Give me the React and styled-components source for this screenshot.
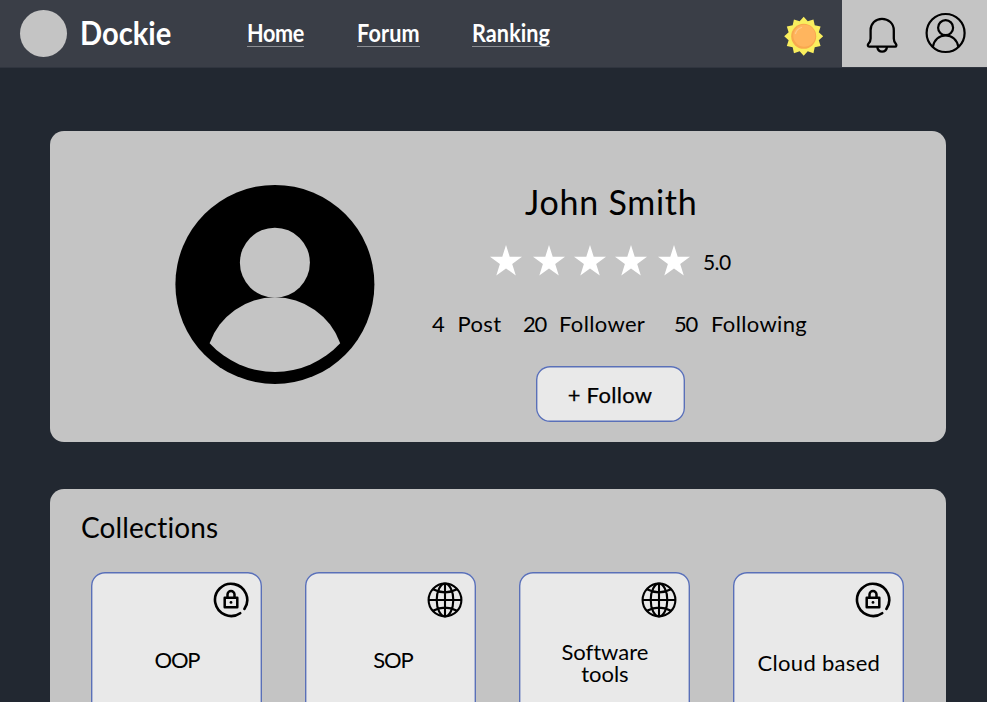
import React from "react";
import styled, { createGlobalStyle } from "styled-components";

const GlobalStyle = createGlobalStyle`
  * { box-sizing: border-box; }
  body {
    margin: 0;
    background: #222831;
    color: #000;
    font-family: Lato, "Noto Sans", sans-serif;
    font-variant-ligatures: none;
  }
  svg { display: block; flex: none; }
`;

const Page = styled.div`
  height: 702px;
  overflow: hidden;
  background: #222831;
`;

const Header = styled.header`
  display: flex;
  align-items: stretch;
  height: 68px;
  background: #3a3e47;
  border-bottom: 1px solid #30353f;
`;

const Brand = styled.div`
  display: flex;
  flex: none;
  width: 247px;
  padding: 0 0 1px 20px;
  align-items: center;
  gap: 13px;
`;

const Logo = styled.div`
  flex: none;
  width: 47px;
  height: 47px;
  border-radius: 50%;
  background: #c4c4c4;
`;

const BrandName = styled.span`
  font-size: 32px;
  font-weight: 700;
  line-height: 40px;
  color: #fff;
  transform: scaleX(0.91);
  transform-origin: left;
`;

const Nav = styled.nav`
  display: grid;
  grid-template-columns: 109.5px 115.5px 78px;
  align-items: start;
  padding-top: 18px;
`;

const NavLink = styled.a`
  width: ${(p) => p.$width}px;
  height: 29px;
  border-bottom: 1px solid #8c8f94;
  color: #fff;
`;

const NavLabel = styled.span`
  display: block;
  width: max-content;
  font-size: 24px;
  font-weight: 700;
  line-height: 30px;
  letter-spacing: ${(p) => p.$spacing || 0}px;
  transform: scaleX(0.9);
  transform-origin: left;
`;

const ThemeToggle = styled.div`
  margin: 16px 18px 0 auto;
`;

const AccountTools = styled.div`
  display: flex;
  flex: none;
  width: 145px;
  gap: 26px;
  padding: 12px 0 0 24px;
  background: #c4c4c4;
`;

const Main = styled.main`
  display: flex;
  flex-direction: column;
  gap: 47px;
  width: 895.5px;
  margin: 63px 0 0 50px;
`;

const Panel = styled.section`
  background: #c4c4c4;
  border-radius: 14px;
`;

const ProfilePanel = styled(Panel)`
  display: flex;
  height: 311px;
  padding-left: 125px;
  gap: 57px;
`;

const AvatarBox = styled.div`
  padding-top: 53px;
`;

const Info = styled.div`
  display: flex;
  flex-direction: column;
  align-items: flex-start;
  padding-top: 51px;
`;

const Name = styled.h1`
  margin: 0 0 0 93px;
  font-size: 34px;
  font-weight: 400;
  line-height: 40px;
  letter-spacing: 0.75px;
`;

const Rating = styled.div`
  display: grid;
  grid-template-columns: 43px 41px 41px 43px 45px auto;
  margin: 23px 0 0 58px;
`;

const Score = styled.span`
  font-size: 21px;
  line-height: 33px;
  letter-spacing: -0.6px;
`;

const Stats = styled.div`
  display: grid;
  grid-template-columns: 91px 151px auto;
  height: 28px;
  margin-top: 32px;
`;

const Stat = styled.div`
  display: grid;
  grid-template-columns: ${(p) => p.$column}px auto;
  font-size: 22px;
  line-height: 28px;
  letter-spacing: 0.35px;
`;

const Count = styled.span`
  letter-spacing: -1.3px;
`;

const FollowButton = styled.button`
  width: 149px;
  height: 56px;
  margin: 27.5px 0 0 103.5px;
  padding: 2px 0 0;
  border: 0;
  border-radius: 14px;
  background: #e9e9e9;
  box-shadow: inset 0 0 0 1.4px #5a70b8;
  color: #000;
  font: 400 22px/28px Lato, sans-serif;
  letter-spacing: 0.3px;
  -webkit-text-stroke: 0.25px #000;
`;

const CollectionsPanel = styled(Panel)`
  height: 311px;
  padding: 20px 41px 0 41.4px;
`;

const SectionTitle = styled.h2`
  margin: 0 0 26px -10.4px;
  font-size: 28px;
  font-weight: 400;
  line-height: 37px;
  letter-spacing: 0.1px;
`;

const CardRow = styled.div`
  display: grid;
  grid-template-columns: repeat(4, 171px);
  column-gap: 43px;
`;

const Card = styled.article`
  display: flex;
  flex-direction: column;
  height: 190px;
  padding: 10px 13px 0;
  border-radius: 14px;
  background: #e9e9e9;
  box-shadow: inset 0 0 0 1.4px #5a70b8;
`;

const CardIcon = styled.div`
  align-self: flex-end;
`;

const CardTitle = styled.h3`
  align-self: center;
  width: ${(p) => p.$width || 144}px;
  margin: ${(p) => p.$top}px 0 0;
  padding-left: ${(p) => p.$shift || 0}px;
  font-size: 22px;
  font-weight: 400;
  line-height: 22px;
  letter-spacing: ${(p) => p.$spacing || 0}px;
  text-align: center;
`;

const sunPoints = Array.from({ length: 24 }, (_, i) => {
  const a = (i * Math.PI) / 12;
  const r = i % 2 ? 15.6 : 19.5;
  return `${19.7 + r * Math.sin(a)},${20.3 - r * Math.cos(a)}`;
}).join(" ");

const SunIcon = () => (
  <svg width="40" height="40" viewBox="0 0 40 40">
    <polygon points={sunPoints} fill="#f9ee5e" />
    <circle cx="19.7" cy="20.3" r="12.5" fill="#f8a84f" />
    <circle cx="20.3" cy="19.7" r="11" fill="#ffb55e" />
    <path d="M11.5 17.5a9 9 0 0 1 6-6" fill="none" stroke="#ffc98a" strokeWidth="1.3" strokeLinecap="round" />
  </svg>
);

const BellIcon = () => (
  <svg width="32" height="42" viewBox="0 0 32 42" fill="none" stroke="#000" strokeWidth="2.3" strokeLinejoin="round">
    <path d="M4.6 26.5V18.2C4.6 11.5 9.5 6.8 16 6.8s11.8 4.7 11.8 11.4v8.3c0 2.6.7 3.8 2 5.3 1 1.3.7 2.9-.8 2.9H3.2c-1.4 0-1.8-1.6-.8-2.9 1.5-1.5 2.2-2.7 2.2-5.3z" />
    <path d="M11.2 35c.6 3 2.4 4.6 4.9 4.6S20.5 38 21.1 35" />
  </svg>
);

const UserIcon = () => (
  <svg width="42" height="42" viewBox="0 0 42 42" fill="none" stroke="#000" strokeWidth="2.2">
    <circle cx="21.6" cy="21" r="19" />
    <circle cx="21.6" cy="15.7" r="7.5" />
    <path d="M8.8 35C10.1 28 15.1 23.3 21.6 23.3S33.1 28 34.4 35" />
  </svg>
);

const Avatar = () => (
  <svg width="200" height="200" viewBox="0 0 200 200">
    <circle cx="99.9" cy="100.4" r="99.5" fill="#000" />
    <circle cx="99.9" cy="78.7" r="35" fill="#c4c4c4" />
    <path d="M34.6 159.2A69.4 69.4 0 0 1 165.2 159.2A88.6 88.6 0 0 1 34.6 159.2Z" fill="#c4c4c4" />
  </svg>
);

const Star = () => (
  <svg width="32" height="31" viewBox="0 0 32 31">
    <path fill="#fff" d="M16 0 19.7 11.7H32L22.2 18.9 25.8 30.6 16 23.4 6.3 30.6 9.9 18.9 0 11.7H12.3Z" />
  </svg>
);

const LockIcon = () => (
  <svg width="36" height="36" viewBox="0 0 36 36" fill="none" stroke="#000" strokeWidth="2.6" strokeLinecap="round">
    <path d="M31.4 27A16.1 16.1 0 1 0 27.2 31.2" />
    <path
      d="M11.7 15.7H24.3V25.3H11.7ZM14.5 15.5V12.5a3.5 3.5 0 0 1 7 0V15.5"
      strokeWidth="2.5"
      strokeLinejoin="round"
    />
    <circle cx="18" cy="20.4" r="1.4" fill="#000" stroke="none" />
  </svg>
);

const GlobeIcon = () => (
  <svg width="36" height="36" viewBox="0 0 36 36" fill="none" stroke="#000" strokeWidth="2.1">
    <circle cx="18" cy="18" r="16.4" />
    <ellipse cx="18" cy="18" rx="8.3" ry="16.4" />
    <path d="M18 1.5V34.5M1.5 18H34.5M6 7.3Q18 13.5 30 7.3M6 28.7Q18 22.5 30 28.7" />
  </svg>
);

const links = [
  { label: "Home", width: 57, spacing: -0.4 },
  { label: "Forum", width: 63.5, spacing: 0.2 },
  { label: "Ranking", width: 78, spacing: 0.1 },
];

const stats = [
  { count: "4", label: "Post", column: 25.5 },
  { count: "20", label: "Follower", column: 36 },
  { count: "50", label: "Following", column: 37 },
];

const collections = [
  { title: "OOP", top: 31, Icon: LockIcon, spacing: -1.2 },
  { title: "SOP", top: 31, Icon: GlobeIcon, spacing: -1.2, shift: 4 },
  { title: "Software tools", top: 23, Icon: GlobeIcon, spacing: 0, width: 100 },
  { title: "Cloud based", top: 34, Icon: LockIcon, spacing: 0.3 },
];

export default function App() {
  return (
    <Page>
      <GlobalStyle />
      <Header>
        <Brand>
          <Logo />
          <BrandName>Dockie</BrandName>
        </Brand>
        <Nav>
          {links.map((l) => (
            <NavLink key={l.label} $width={l.width}>
              <NavLabel $spacing={l.spacing}>{l.label}</NavLabel>
            </NavLink>
          ))}
        </Nav>
        <ThemeToggle>
          <SunIcon />
        </ThemeToggle>
        <AccountTools>
          <BellIcon />
          <UserIcon />
        </AccountTools>
      </Header>
      <Main>
        <ProfilePanel>
          <AvatarBox>
            <Avatar />
          </AvatarBox>
          <Info>
            <Name>John Smith</Name>
            <Rating>
              {[1, 2, 3, 4, 5].map((n) => (
                <Star key={n} />
              ))}
              <Score>5.0</Score>
            </Rating>
            <Stats>
              {stats.map((s) => (
                <Stat key={s.label} $column={s.column}>
                  <Count>{s.count}</Count>
                  <span>{s.label}</span>
                </Stat>
              ))}
            </Stats>
            <FollowButton>+ Follow</FollowButton>
          </Info>
        </ProfilePanel>
        <CollectionsPanel>
          <SectionTitle>Collections</SectionTitle>
          <CardRow>
            {collections.map(({ title, top, Icon, spacing, shift, width }) => (
              <Card key={title}>
                <CardIcon>
                  <Icon />
                </CardIcon>
                <CardTitle $top={top} $spacing={spacing} $shift={shift} $width={width}>
                  {title}
                </CardTitle>
              </Card>
            ))}
          </CardRow>
        </CollectionsPanel>
      </Main>
    </Page>
  );
}
